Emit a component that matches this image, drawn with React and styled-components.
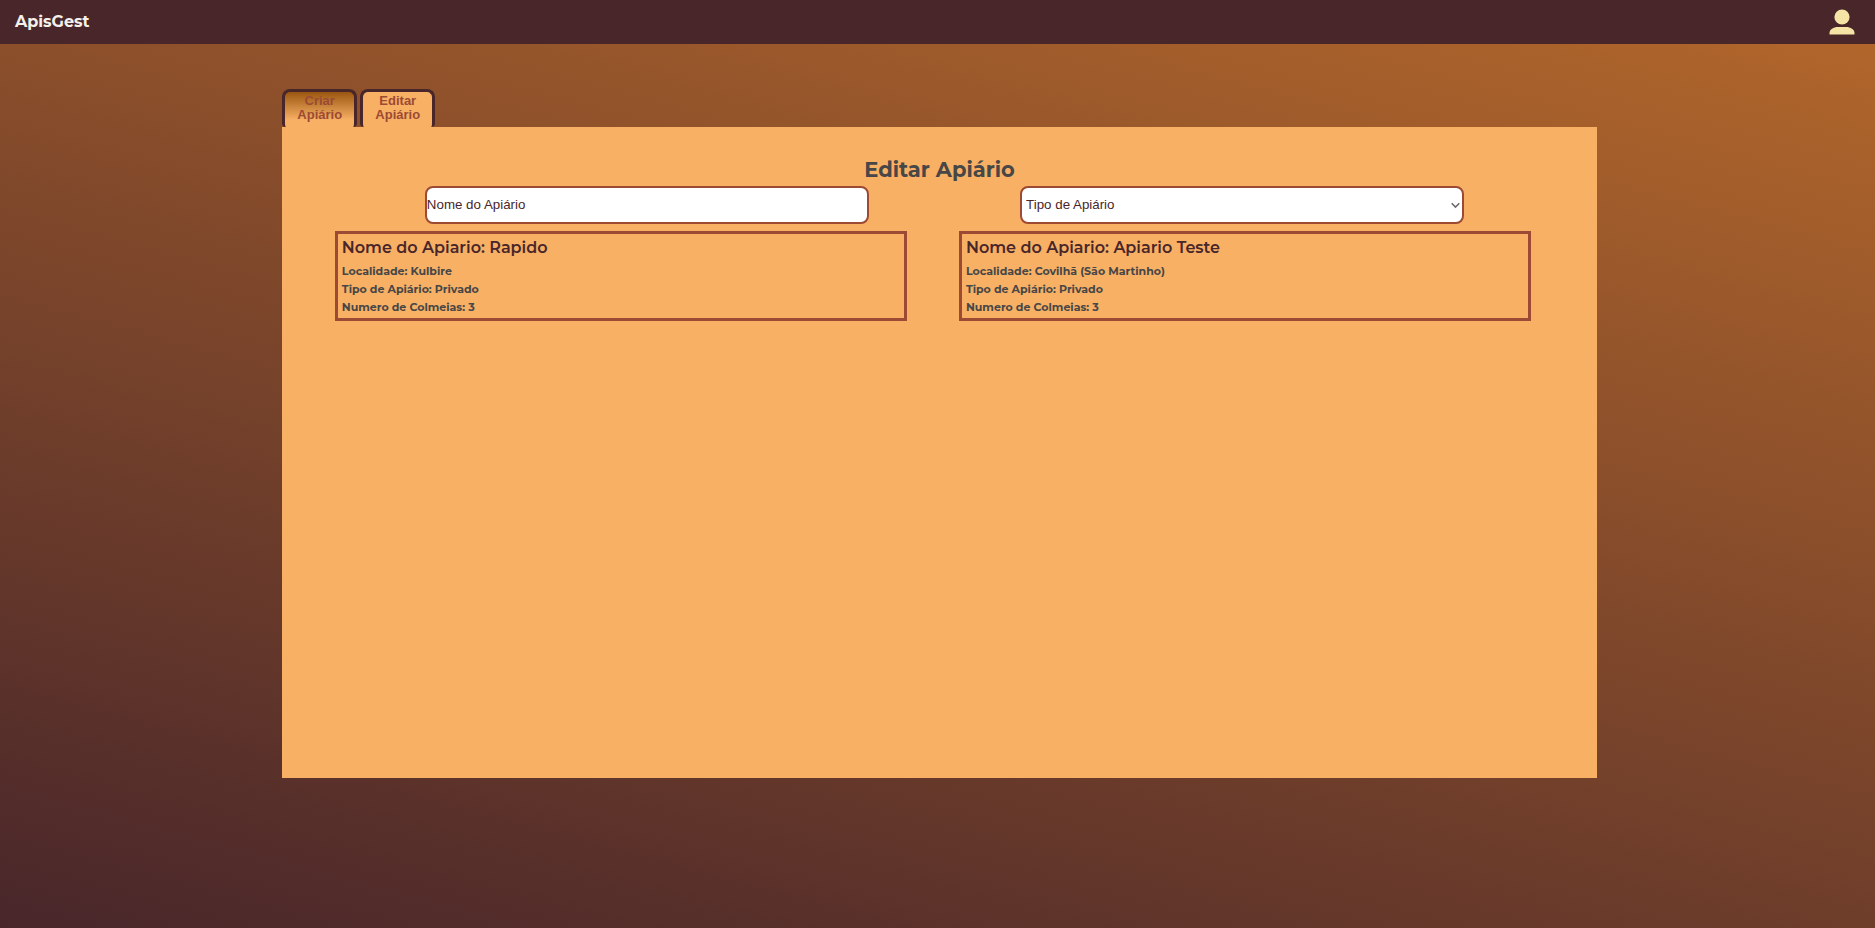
import React from "react";
import styled, { createGlobalStyle } from "styled-components";

const GlobalStyle = createGlobalStyle`
  *, *::before, *::after { box-sizing: border-box; }
  body {
    margin: 0;
    font-family: Montserrat, Inter, sans-serif;
    color: #48262a;
  }
`;

const Page = styled.div`
  min-height: 100vh;
  display: flex;
  flex-direction: column;
  background: linear-gradient(15deg, #48262a, #b4682b);
`;

const Navbar = styled.header`
  height: 44px;
  padding: 0 20px 0 15px;
  display: flex;
  align-items: center;
  justify-content: space-between;
  background: #48262a;
`;

const Brand = styled.a`
  color: #f5f1ea;
  font-size: 16px;
  line-height: 20px;
  font-weight: 700;
  text-decoration: none;
`;

const ProfileButton = styled.button`
  display: flex;
  padding: 0;
  border: 0;
  background: none;
  cursor: pointer;
`;

const Main = styled.main`
  margin: 45px calc(15% - 3px) 0 calc(15% + 1px);
  padding-bottom: 40px;
`;

const Tabs = styled.div`
  display: flex;
  gap: 3px;
`;

const Tab = styled.button`
  width: 75px;
  height: 38px;
  padding: 0 8px 4px;
  border: 3px solid #48262a;
  border-bottom: 0;
  border-radius: 8px 8px 4px 4px;
  background: ${(p) => (p.$active ? "#f8b065" : "linear-gradient(#9a5610, #f8b065 80%)")};
  color: #9c4a34;
  font-family: "Liberation Sans", Arial, sans-serif;
  font-size: 13px;
  font-weight: 700;
  line-height: 14px;
  cursor: pointer;
`;

const Panel = styled.section`
  min-height: 651px;
  padding-top: 28px;
  background: #f8b065;
`;

const Title = styled.h1`
  margin: 0 0 1px;
  font-size: 21px;
  line-height: 30px;
  font-weight: 700;
  text-align: center;
  color: #474747;
`;

const Filters = styled.form`
  display: flex;
  gap: 151px;
  padding: 0 calc(10% + 1px) 0 calc(11% - 2px);
`;

const Field = styled.div`
  flex: 1;
  display: flex;
  position: relative;
`;

const control = `
  width: 100%;
  height: 38px;
  border: 2px solid #9c4a34;
  border-radius: 8px;
  background: #fff;
  color: #48262a;
  font-family: "Liberation Sans", Arial, sans-serif;
`;

const TextInput = styled.input`
  ${control}
  padding: 0 0 2px;
  &::placeholder { color: #48262a; opacity: 1; }
`;

const Select = styled.select`
  ${control}
  padding: 0 4px 2px;
  appearance: none;
`;

const Chevron = styled.svg`
  position: absolute;
  right: 4px;
  top: 16px;
  pointer-events: none;
`;

const Cards = styled.div`
  display: grid;
  grid-template-columns: 1fr 1fr;
  gap: 52px;
  padding: 7px 5% 0 4%;
`;

const Card = styled.article`
  height: 90px;
  padding: 4px;
  border: 3px solid #9c4a34;
`;

const CardTitle = styled.h2`
  margin: 0 0 4px;
  font-size: 16px;
  line-height: 20px;
  font-weight: 600;
`;

const Detail = styled.p`
  margin: 0;
  font-size: 11px;
  line-height: 18px;
  font-weight: 700;
  color: #474747;
`;

const apiaries = [
  { name: "Rapido", place: "Kulbire", type: "Privado", hives: 3 },
  { name: "Apiario Teste", place: "Covilhã (São Martinho)", type: "Privado", hives: 3 },
];

export default function App() {
  return (
    <Page>
      <GlobalStyle />
      <Navbar>
        <Brand href="#">ApisGest</Brand>
        <ProfileButton type="button" aria-label="Perfil">
          <svg width="26" height="26" viewBox="0 0 26 26" fill="#f5e4a6">
            <circle cx="13" cy="8" r="7.6" />
            <path d="M0.5 25.5v-1.5c0-3.500 4-6 8.500-6h8c4.500 0 8.500 2.500 8.500 6v1.500z" />
          </svg>
        </ProfileButton>
      </Navbar>
      <Main>
        <Tabs>
          <Tab type="button">Criar Apiário</Tab>
          <Tab type="button" $active>Editar Apiário</Tab>
        </Tabs>
        <Panel>
          <Title>Editar Apiário</Title>
          <Filters>
            <Field>
              <TextInput type="text" aria-label="Nome do Apiário" placeholder="Nome do Apiário" />
            </Field>
            <Field>
              <Select aria-label="Tipo de Apiário">
                <option>Tipo de Apiário</option>
              </Select>
              <Chevron width="9" height="7" viewBox="0 0 9 7" fill="none" stroke="#6b6b6b" strokeWidth="1.6">
                <path d="M0.700 1.200l3.800 3.800 3.800-3.800" />
              </Chevron>
            </Field>
          </Filters>
          <Cards>
            {apiaries.map((a) => (
              <Card key={a.name}>
                <CardTitle>Nome do Apiario: {a.name}</CardTitle>
                <Detail>Localidade: {a.place}</Detail>
                <Detail>Tipo de Apiário: {a.type}</Detail>
                <Detail>Numero de Colmeias: {a.hives}</Detail>
              </Card>
            ))}
          </Cards>
        </Panel>
      </Main>
    </Page>
  );
}
